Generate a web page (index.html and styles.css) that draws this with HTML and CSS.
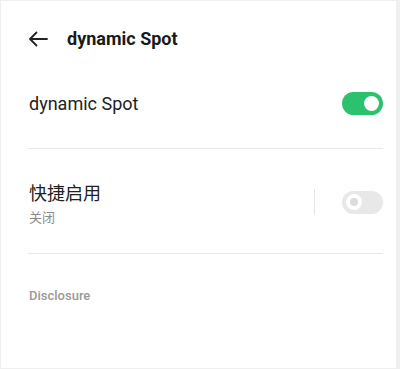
FILE: index.html
```html
<!DOCTYPE html>
<html lang="zh-CN">
<head>
    <meta charset="UTF-8">
    <title>dynamic Spot</title>
    <link rel="stylesheet" href="styles.css">
</head>
<body>
    <div class="screen">
        <header class="top-bar">
            <svg class="back-icon" width="20" height="16" viewBox="0 0 20 16">
                <path d="M19 8H2M8.5 1.5L2 8l6.5 6.5" fill="none" stroke="#222" stroke-width="1.8" stroke-linecap="round" stroke-linejoin="round"/>
            </svg>
            <h1 class="page-title">dynamic Spot</h1>
        </header>

        <div class="setting-row main-row">
            <div class="row-text">
                <div class="row-title">dynamic Spot</div>
            </div>
            <span class="switch on"><span class="knob"></span></span>
        </div>
        <div class="divider"></div>

        <div class="setting-row sub-row">
            <div class="row-text">
                <div class="row-title">快捷启用</div>
                <div class="row-summary">关闭</div>
            </div>
            <span class="v-sep"></span>
            <span class="switch off"><span class="knob"></span></span>
        </div>
        <div class="divider"></div>

        <div class="section-label">Disclosure</div>
    </div>
</body>
</html>
```

FILE: styles.css
```css
* {
    margin: 0;
    padding: 0;
    box-sizing: border-box;
}

body {
    font-family: Roboto, "Noto Sans CJK SC", sans-serif;
    background: #fff;
    color: #222;
}

.screen {
    width: 400px;
    height: 369px;
    border: 1px solid #efefef;
    border-right-width: 4px;
    padding: 0 13px 0 27px;
}

/* 顶部栏 */
.top-bar {
    display: flex;
    align-items: center;
    height: 74px;
    padding-top: 1px;
}

.back-icon {
    margin-right: 19px;
}

.page-title {
    font-size: 18px;
    font-weight: bold;
    color: #1a1a1a;
}

/* 设置项 */
.setting-row {
    display: flex;
    align-items: center;
}

.main-row {
    height: 56px;
}

.sub-row {
    height: 104px;
    padding-top: 2px;
}

.row-text {
    flex: 1;
}

.row-title {
    font-size: 18px;
    color: #222;
    padding-left: 1px;
}

.row-summary {
    font-size: 13px;
    color: #8a8a8a;
    margin-top: 2px;
    padding-left: 1px;
}

.v-sep {
    width: 1px;
    height: 26px;
    background: #e4e4e4;
    margin-right: 27px;
}

.switch {
    width: 41px;
    height: 23px;
    border-radius: 12px;
    display: flex;
    align-items: center;
    padding: 0 4px;
}

.switch.on {
    background: #2bc26f;
    justify-content: flex-end;
}

.switch.off {
    background: #e8e8e8;
}

.switch.on .knob {
    width: 15px;
    height: 15px;
    border-radius: 50%;
    background: #fff;
}

.switch.off .knob {
    width: 16px;
    height: 16px;
    border-radius: 50%;
    border: 4px solid #fff;
    background: #dcdcdc;
}

.divider {
    height: 1px;
    background: #e8e8e8;
    margin-top: 17px;
}

.sub-row + .divider {
    margin-top: 0;
}

.section-label {
    font-size: 13px;
    font-weight: 500;
    color: #999;
    margin-top: 34px;
    padding-left: 1px;
}
```
